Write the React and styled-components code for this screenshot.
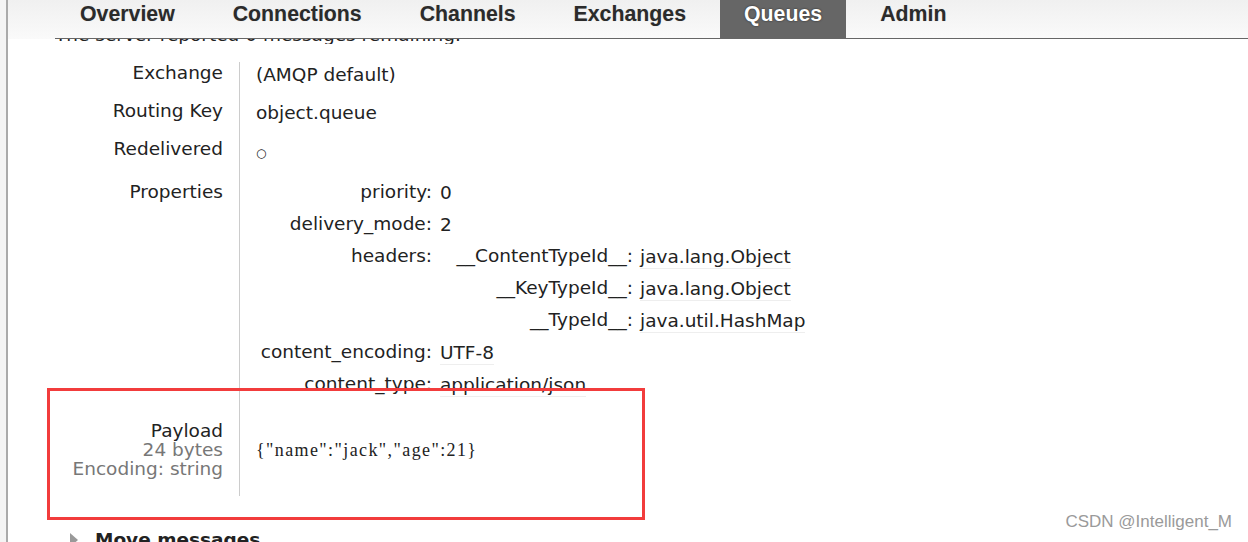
import styled, { createGlobalStyle } from 'styled-components';

const Global = createGlobalStyle`
  html, body { margin: 0; padding: 0; background: #f4f4f4; }
  body { font-family: "DejaVu Sans", Verdana, sans-serif; color: #222; }
`;

const tabs = ['Overview', 'Connections', 'Channels', 'Exchanges', 'Queues', 'Admin'];

const headers = [
  ['__ContentTypeId__', 'java.lang.Object'],
  ['__KeyTypeId__', 'java.lang.Object'],
  ['__TypeId__', 'java.util.HashMap'],
];

export default function App() {
  return (
    <Root>
      <Global />
      <Page>
        <Nav>
          <NavList>
            {tabs.map(t => (
              <NavItem key={t} $active={t === 'Queues'}>{t}</NavItem>
            ))}
          </NavList>
        </Nav>

        <Clipped>
          <ClippedText>The server reported 0 messages remaining.</ClippedText>
        </Clipped>

        <Details>
          <Row>
            <Label>Exchange</Label>
            <Value>(AMQP default)</Value>
          </Row>
          <Row>
            <Label>Routing Key</Label>
            <Value>object.queue</Value>
          </Row>
          <Row $pad={19}>
            <Label>Redelivered</Label>
            <Value><Bool>○</Bool></Value>
          </Row>
          <Row $pad={0}>
            <Label>Properties</Label>
            <Value $flush>
              <PropRow>
                <PropKey>priority:</PropKey>
                <PropVal>0</PropVal>
              </PropRow>
              <PropRow>
                <PropKey>delivery_mode:</PropKey>
                <PropVal>2</PropVal>
              </PropRow>
              <PropRow>
                <PropKey>headers:</PropKey>
                <HeaderTable>
                  {headers.map(([k, v]) => (
                    <PropRow key={k}>
                      <HeaderKey>{k}:</HeaderKey>
                      <PropVal $line>{v}</PropVal>
                    </PropRow>
                  ))}
                </HeaderTable>
              </PropRow>
              <PropRow>
                <PropKey>content_encoding:</PropKey>
                <PropVal $line>UTF-8</PropVal>
              </PropRow>
              <PropRow>
                <PropKey>content_type:</PropKey>
                <PropVal $line>application/json</PropVal>
              </PropRow>
            </Value>
          </Row>
          <PayloadRow>
            <PayloadLabel>
              Payload
              <Muted>24 bytes</Muted>
              <Muted>Encoding: string</Muted>
            </PayloadLabel>
            <PayloadValue>
              <Pre>{'{"name":"jack","age":21}'}</Pre>
            </PayloadValue>
          </PayloadRow>
        </Details>

        <Section>
          <Arrow />
          <SectionTitle>Move messages</SectionTitle>
        </Section>
      </Page>

      <Highlight />
      <Watermark>CSDN @Intelligent_M</Watermark>
    </Root>
  );
}

const Root = styled.div`
  position: relative;
  height: 542px;
  overflow: hidden;
  padding-left: 6px;
`;

const Page = styled.div`
  height: 542px;
  background: #fff;
  border-left: 2px solid #aaa;
  overflow: hidden;
`;

const Nav = styled.div`
  display: flex;
  height: 39px;
  padding-left: 47px;
  background: linear-gradient(#f0f0f0, #fafafa);
`;

const NavList = styled.ul`
  display: flex;
  flex: 1;
  margin: 0;
  padding: 0 0 0 1px;
  list-style: none;
  border-bottom: 1px solid #666;
`;

const NavItem = styled.li`
  height: 38px;
  padding: 0 24px;
  margin-right: 10px;
  font-family: "Liberation Sans", Arial, sans-serif;
  font-weight: bold;
  font-size: 21.3px;
  line-height: 28px;
  color: ${p => (p.$active ? '#fff' : '#2b2b2b')};
  background: ${p => (p.$active ? '#666' : 'transparent')};
  text-shadow: ${p => (p.$active ? '0 0 2px #222' : '0 0 1px #ccc')};
`;

const Clipped = styled.div`
  height: 5px;
  overflow: hidden;
  margin-left: 47px;
`;

const ClippedText = styled.div`
  margin-top: -15px;
  font-size: 18.5px;
  line-height: 22px;
  white-space: nowrap;
`;

const Details = styled.div`
  margin-top: 18px;
  font-size: 18.5px;
  line-height: 22px;
`;

const Row = styled.div`
  display: flex;
  & > * { padding-bottom: ${p => (p.$pad ?? 16)}px; }
  & > *:last-child { padding-bottom: ${p => Math.max((p.$pad ?? 16) - 2, 0)}px; }
`;

const Label = styled.div`
  width: 231px;
  box-sizing: border-box;
  padding-right: 16px;
  text-align: right;
  color: #222;
`;

const Value = styled.div`
  flex: 1;
  border-left: 1px solid #ccc;
  padding-left: 16px;
  padding-top: ${p => (p.$flush ? 0 : 2)}px;
`;

const Bool = styled.span`
  font-size: 12px;
`;

const PropRow = styled.div`
  display: flex;
  align-items: flex-start;
  min-height: 32px;
`;

const PropKey = styled.div`
  width: 176px;
  flex: none;
  text-align: right;
  line-height: 22px;
  margin-right: 8px;
`;

const HeaderTable = styled.div`
  display: flex;
  flex-direction: column;
  margin-left: -7px;
`;

const HeaderKey = styled(PropKey)`
  width: 200px;
  margin-right: 7px;
`;

const PropVal = styled.span`
  display: inline-block;
  line-height: 23px;
  border-bottom: 1px solid ${p => (p.$line ? '#eee' : 'transparent')};
`;

const PayloadRow = styled.div`
  display: flex;
`;

const PayloadLabel = styled(Label)`
  display: flex;
  flex-direction: column;
  padding-top: 16px;
  padding-bottom: 18px;
  line-height: 19px;
`;

const Muted = styled.span`
  color: #777;
`;

const PayloadValue = styled(Value)`
  padding-top: 34px;
`;

const Pre = styled.pre`
  margin: 0;
  font-family: "Liberation Serif", "Times New Roman", serif;
  font-size: 18px;
  line-height: 22px;
  letter-spacing: 1.4px;
  color: #222;
`;

const Section = styled.div`
  display: flex;
  align-items: center;
  margin-top: 32px;
  padding-left: 62px;
`;

const Arrow = styled.span`
  width: 0;
  height: 0;
  border-left: 8px solid #999;
  border-top: 7px solid transparent;
  border-bottom: 7px solid transparent;
  margin-right: 17px;
`;

const SectionTitle = styled.div`
  font-weight: bold;
  font-size: 18.5px;
  line-height: 24px;
  color: #222;
`;

const Highlight = styled.div`
  position: absolute;
  left: 47px;
  top: 388px;
  width: 598px;
  height: 132px;
  box-sizing: border-box;
  border: 3px solid #f23c3c;
  pointer-events: none;
`;

const Watermark = styled.div`
  position: absolute;
  right: 16px;
  top: 511px;
  font-family: "Liberation Sans", Arial, sans-serif;
  font-size: 17px;
  line-height: 22px;
  color: #9a9a9a;
`;
